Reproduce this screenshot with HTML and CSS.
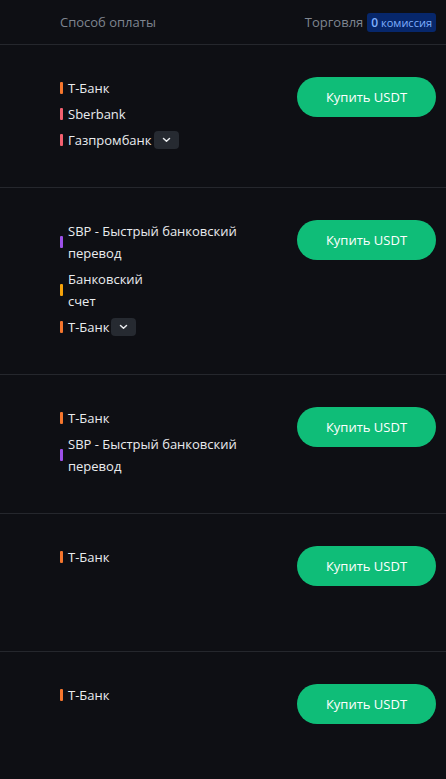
FILE: index.html
```html
<!DOCTYPE html>
<html lang="ru">
<head>
<meta charset="utf-8">
<link rel="stylesheet" href="styles.css">
</head>
<body>
<div class="table">
  <div class="head">
    <div class="head-pay">Способ оплаты</div>
    <div class="head-trade">Торговля <span class="badge"><b>0</b> комиссия</span></div>
  </div>

  <div class="row">
    <div class="methods">
      <div class="m"><span class="bar orange"></span><span class="name">Т-Банк</span></div>
      <div class="m"><span class="bar pink"></span><span class="name">Sberbank</span></div>
      <div class="m"><span class="bar pink"></span><span class="name">Газпромбанк</span><span class="more"><svg width="9" height="6" viewBox="0 0 9 6"><path d="M1.5 1.5 L4.5 4.2 L7.5 1.5" fill="none" stroke="#eaecef" stroke-width="1.5" stroke-linecap="round" stroke-linejoin="round"/></svg></span></div>
    </div>
    <button class="buy">Купить USDT</button>
  </div>

  <div class="row">
    <div class="methods">
      <div class="m"><span class="bar purple"></span><span class="name">SBP - Быстрый банковский перевод</span></div>
      <div class="m"><span class="bar yellow"></span><span class="name">Банковский<br>счет</span></div>
      <div class="m"><span class="bar orange"></span><span class="name">Т-Банк</span><span class="more"><svg width="9" height="6" viewBox="0 0 9 6"><path d="M1.5 1.5 L4.5 4.2 L7.5 1.5" fill="none" stroke="#eaecef" stroke-width="1.5" stroke-linecap="round" stroke-linejoin="round"/></svg></span></div>
    </div>
    <button class="buy">Купить USDT</button>
  </div>

  <div class="row">
    <div class="methods">
      <div class="m"><span class="bar orange"></span><span class="name">Т-Банк</span></div>
      <div class="m"><span class="bar purple"></span><span class="name">SBP - Быстрый банковский перевод</span></div>
    </div>
    <button class="buy">Купить USDT</button>
  </div>

  <div class="row">
    <div class="methods">
      <div class="m"><span class="bar orange"></span><span class="name">Т-Банк</span></div>
    </div>
    <button class="buy">Купить USDT</button>
  </div>

  <div class="row">
    <div class="methods">
      <div class="m"><span class="bar orange"></span><span class="name">Т-Банк</span></div>
    </div>
    <button class="buy">Купить USDT</button>
  </div>
</div>
</body>
</html>
```
FILE: styles.css
```css
html, body {
  margin: 0;
  padding: 0;
  background: #0e0f14;
}
body {
  font-family: "Open Sans", "Noto Sans", sans-serif;
  font-size: 13px;
  color: #eaecef;
  height: 779px;
  overflow: hidden;
}
.table {
  display: flex;
  flex-direction: column;
}
.head {
  height: 44px;
  border-bottom: 1px solid #25272d;
  display: flex;
  align-items: center;
  justify-content: space-between;
  padding: 0 10px 0 60px;
  color: #7f8590;
}
.head-trade {
  display: flex;
  align-items: center;
  gap: 4px;
}
.badge {
  background: #07276b;
  color: #7fb0ff;
  font-size: 11px;
  border-radius: 3px;
  padding: 1px 4px;
  line-height: 17px;
}
.badge b {
  font-weight: 600;
  font-size: 12px;
}
.row {
  display: flex;
  justify-content: space-between;
  align-items: flex-start;
  padding: 32px 10px 36px 60px;
  border-bottom: 1px solid #25272d;
}
.methods {
  display: flex;
  flex-direction: column;
  gap: 4px;
  width: 185px;
  min-height: 69px;
}
.m {
  display: flex;
  align-items: center;
  line-height: 22px;
}
.bar {
  flex: none;
  width: 3px;
  height: 12px;
  border-radius: 1px;
  margin-right: 5px;
}
.orange { background: #f5762d; }
.pink { background: #f2606f; }
.purple { background: #9d50e8; }
.yellow { background: #f5a20a; }
.more {
  flex: none;
  display: inline-flex;
  align-items: center;
  justify-content: center;
  width: 25px;
  height: 18px;
  border-radius: 4px;
  background: #262a31;
  margin-left: 2px;
}
.buy {
  flex: none;
  width: 139px;
  height: 40px;
  border: none;
  border-radius: 20px;
  background: #0fbd78;
  color: #ffffff;
  font-family: inherit;
  font-size: 13px;
  padding: 0;
}
```
